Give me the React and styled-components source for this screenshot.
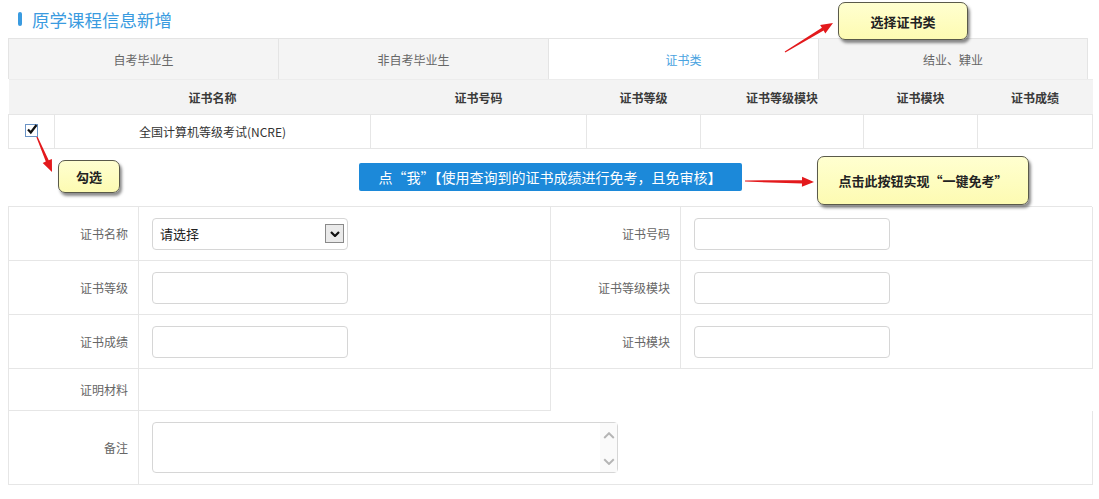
import React from "react";
import styled, { createGlobalStyle } from "styled-components";

const Global = createGlobalStyle`
  html, body { margin: 0; padding: 0; background: #fff; }
  body {
    font-family: "Noto Sans CJK SC", "Noto Sans", sans-serif;
    font-size: 12px;
    color: #333;
  }
`;

const Page = styled.div`
  position: relative;
  width: 1084px;
  margin: 0 7px 0 8px;
`;

const TitleBar = styled.div`
  height: 38px;
  display: flex;
  align-items: center;
  padding-left: 10px;
  gap: 10px;
`;

const TitleMark = styled.span`
  width: 4px;
  height: 14px;
  border-radius: 2px;
  background: #3a9be0;
`;

const TitleText = styled.h1`
  margin: 0;
  font-size: 17.5px;
  font-weight: 400;
  color: #3a9be0;
`;

const Tabs = styled.div`
  display: grid;
  grid-template-columns: repeat(4, 270px);
  height: 41px;
`;

const Tab = styled.div`
  display: flex;
  align-items: center;
  justify-content: center;
  border-top: 1px solid #e4e4e4;
  border-left: 1px solid #e4e4e4;
  border-right: ${(p) => (p.$last ? "1px solid #e4e4e4" : "none")};
  background: ${(p) => (p.$active ? "#fff" : "#f4f4f4")};
  color: ${(p) => (p.$active ? "#4aa3df" : "#666")};
  font-size: 12px;
`;

const Table = styled.table`
  width: 1084px;
  border-collapse: collapse;
  table-layout: fixed;
`;

const Th = styled.th`
  height: 34px;
  padding: 0;
  background: #f3f3f3;
  font-weight: 700;
  font-size: 12px;
  color: #3a3a3a;
  text-align: center;
  border-top: 1px solid #ececec;
`;

const Td = styled.td`
  height: 33px;
  padding: 0;
  text-align: center;
  border: 1px solid #e6e6e6;
  font-size: 12px;
  color: #333;
`;

const Check = styled.span`
  display: inline-block;
  position: relative;
  width: 11px;
  height: 11px;
  border: 1px solid #6b94c6;
  background: #fff;
  vertical-align: middle;
  margin-top: -6px;
  svg { position: absolute; left: 0px; top: -2px; }
`;

const ActionRow = styled.div`
  height: 57px;
  display: flex;
  justify-content: center;
  padding-top: 14px;
  box-sizing: border-box;
`;

const FreeButton = styled.button`
  height: 28px;
  width: 383px;
  border: none;
  border-radius: 2px;
  background: #1c89d9;
  color: #fff;
  font-family: inherit;
  font-size: 14px;
  padding: 0;
  cursor: pointer;
`;

const Form = styled.div`
  display: grid;
  grid-template-columns: 130px 412px 130px 412px;
  grid-template-rows: 54px 54px 54px 42px 74px;
  border-top: 1px solid #e6e6e6;
  border-left: 1px solid #e6e6e6;
  box-sizing: border-box;
`;

const Label = styled.div`
  display: flex;
  align-items: center;
  justify-content: flex-end;
  padding-right: 10px;
  color: #666;
  font-size: 12px;
  border-right: 1px solid #e6e6e6;
  border-bottom: 1px solid #e6e6e6;
`;

const Field = styled.div`
  display: flex;
  align-items: center;
  padding-left: 13px;
  grid-column: ${(p) => p.$span || "auto"};
  border-right: 1px solid #e6e6e6;
  border-bottom: 1px solid #e6e6e6;
`;

const Empty = styled.div`
  grid-column: ${(p) => p.$span};
`;

const TextInput = styled.input`
  width: 196px;
  height: 32px;
  box-sizing: border-box;
  border: 1px solid #d6d6d6;
  border-radius: 4px;
  outline: none;
  font-family: inherit;
`;

const SelectBox = styled.div`
  width: 196px;
  height: 32px;
  box-sizing: border-box;
  border: 1px solid #d6d6d6;
  border-radius: 4px;
  display: flex;
  align-items: center;
  justify-content: space-between;
  padding: 0 3px 0 7px;
  font-size: 13px;
  color: #222;
`;

const SelectArrow = styled.span`
  width: 19px;
  height: 19px;
  box-sizing: border-box;
  border: 1px solid #8a8a8a;
  background: #eaeaea;
  display: flex;
  align-items: center;
  justify-content: center;
`;

const TextArea = styled.div`
  width: 466px;
  height: 51px;
  box-sizing: border-box;
  border: 1px solid #d6d6d6;
  border-radius: 4px;
  display: flex;
  justify-content: flex-end;
`;

const Scroll = styled.div`
  width: 17px;
  display: flex;
  flex-direction: column;
  justify-content: space-between;
  align-items: center;
  padding: 9px 0 7px;
  background: #fafafa;
`;

const Callout = styled.div`
  position: absolute;
  left: ${(p) => p.$x}px;
  top: ${(p) => p.$y}px;
  width: ${(p) => p.$w}px;
  height: ${(p) => p.$h}px;
  box-sizing: border-box;
  border: 1px solid #5a5a4a;
  border-radius: 7px;
  background: linear-gradient(#ffffd0, #fdfbb2);
  box-shadow: 2px 3px 3px rgba(0, 0, 0, 0.45);
  display: flex;
  align-items: center;
  justify-content: center;
  font-size: 13px;
  font-weight: 700;
  color: #222;
`;

const Overlay = styled.svg`
  position: absolute;
  left: -8px;
  top: 0;
  pointer-events: none;
`;

function arrowPoints(tx, ty, hx, hy) {
  const dx = hx - tx;
  const dy = hy - ty;
  const len = Math.hypot(dx, dy);
  const ux = dx / len;
  const uy = dy / len;
  const nx = -uy;
  const ny = ux;
  const headLen = 12;
  const bx = hx - ux * headLen;
  const by = hy - uy * headLen;
  const pts = [
    [tx + nx * 0.6, ty + ny * 0.6],
    [bx + nx * 1.6, by + ny * 1.6],
    [bx + nx * 5, by + ny * 5],
    [hx, hy],
    [bx - nx * 5, by - ny * 5],
    [bx - nx * 1.6, by - ny * 1.6],
    [tx - nx * 0.6, ty - ny * 0.6],
  ];
  return pts.map((p) => p.map((v) => v.toFixed(1)).join(",")).join(" ");
}

const Arrow = ({ t, h }) => (
  <polygon points={arrowPoints(t[0], t[1], h[0], h[1])} fill="#e3191c" />
);

const Chevron = ({ dir, color = "#222", w = 9, sw = 1.6 }) => (
  <svg width={w} height={w * 0.6} viewBox="0 0 10 6">
    <path
      d={dir === "up" ? "M1 5 L5 1 L9 5" : "M1 1 L5 5 L9 1"}
      fill="none"
      stroke={color}
      strokeWidth={sw}
    />
  </svg>
);

const tabs = ["自考毕业生", "非自考毕业生", "证书类", "结业、肄业"];
const cols = [
  { w: 46, t: "" },
  { w: 316, t: "证书名称" },
  { w: 216, t: "证书号码" },
  { w: 114, t: "证书等级" },
  { w: 163, t: "证书等级模块" },
  { w: 114, t: "证书模块" },
  { w: 115, t: "证书成绩" },
];

export default function App() {
  return (
    <Page>
      <Global />
      <TitleBar>
        <TitleMark />
        <TitleText>原学课程信息新增</TitleText>
      </TitleBar>

      <Tabs>
        {tabs.map((t, i) => (
          <Tab key={t} $active={i === 2} $last={i === 3}>
            {t}
          </Tab>
        ))}
      </Tabs>

      <Table>
        <colgroup>
          {cols.map((c, i) => (
            <col key={i} style={{ width: c.w }} />
          ))}
        </colgroup>
        <thead>
          <tr>
            {cols.map((c, i) => (
              <Th key={i}>{c.t}</Th>
            ))}
          </tr>
        </thead>
        <tbody>
          <tr>
            <Td>
              <Check>
                <svg width="12" height="12" viewBox="0 0 12 12">
                  <path d="M2 6.5 L4.8 9.5 L10.5 2" fill="none" stroke="#111" strokeWidth="2.2" />
                </svg>
              </Check>
            </Td>
            <Td>全国计算机等级考试(NCRE)</Td>
            <Td />
            <Td />
            <Td />
            <Td />
            <Td />
          </tr>
        </tbody>
      </Table>

      <ActionRow>
        <FreeButton type="button">点“我”【使用查询到的证书成绩进行免考，且免审核】</FreeButton>
      </ActionRow>

      <Form>
        <Label>证书名称</Label>
        <Field>
          <SelectBox>
            <span>请选择</span>
            <SelectArrow>
              <Chevron dir="down" w={10} sw={2.2} color="#111" />
            </SelectArrow>
          </SelectBox>
        </Field>
        <Label>证书号码</Label>
        <Field>
          <TextInput />
        </Field>

        <Label>证书等级</Label>
        <Field>
          <TextInput />
        </Field>
        <Label>证书等级模块</Label>
        <Field>
          <TextInput />
        </Field>

        <Label>证书成绩</Label>
        <Field>
          <TextInput />
        </Field>
        <Label>证书模块</Label>
        <Field>
          <TextInput />
        </Field>

        <Label>证明材料</Label>
        <Field />
        <Empty $span="3 / 5" />

        <Label>备注</Label>
        <Field $span="2 / 5">
          <TextArea>
            <Scroll>
              <Chevron dir="up" color="#b5b5b5" w={12} />
              <Chevron dir="down" color="#b5b5b5" w={12} />
            </Scroll>
          </TextArea>
        </Field>
      </Form>

      <Callout $x={830} $y={2} $w={130} $h={38}>选择证书类</Callout>
      <Callout $x={50} $y={160} $w={62} $h={33}>勾选</Callout>
      <Callout $x={809} $y={156} $w={212} $h={49}>点击此按钮实现“一键免考”</Callout>

      <Overlay width="1099" height="499">
        <Arrow t={[785, 52]} h={[833, 23]} />
        <Arrow t={[37, 137]} h={[52, 172]} />
        <Arrow t={[745, 181]} h={[814, 182]} />
      </Overlay>
    </Page>
  );
}
